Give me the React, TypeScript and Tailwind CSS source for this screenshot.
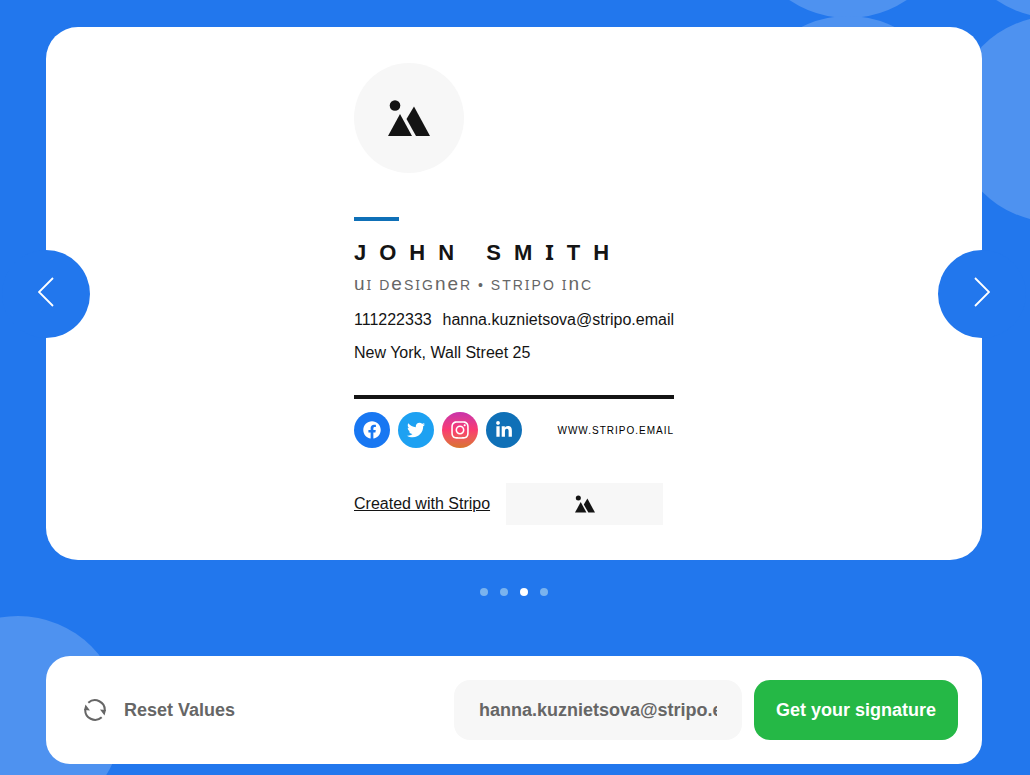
import { useState } from "react";
import { FaFacebook, FaInstagram, FaLinkedinIn, FaTwitter } from "react-icons/fa";

const socials = [
  { name: "Facebook", bg: "bg-[#1877f2]", icon: <FaFacebook size={18} /> },
  { name: "Twitter", bg: "bg-[#1da1f2]", icon: <FaTwitter size={18} /> },
  {
    name: "Instagram",
    bg: "bg-linear-to-b from-[#c832aa] via-[#fb3a70] to-[#d8742a]",
    icon: <FaInstagram size={20} />,
  },
  { name: "LinkedIn", bg: "bg-[#0f70b7]", icon: <FaLinkedinIn size={18} /> },
];

function Mountains({ className }: { className: string }) {
  return (
    <svg viewBox="0 0 42 36" fill="#141414" className={className} aria-hidden="true">
      <circle cx="7" cy="5.5" r="5.3" />
      <path d="M12 14 24 36H0z" />
      <path d="M26 6.500 42 36H28L18.500 19z" />
    </svg>
  );
}

function ResetIcon() {
  return (
    <svg viewBox="0 0 22 22" className="size-[22px]" fill="none" aria-hidden="true">
      <path
        d="M4.300 3.800A9.800 9.800 0 0 1 20.700 12M17.700 18.200A9.800 9.800 0 0 1 1.300 10"
        stroke="currentColor"
        strokeWidth="2"
      />
      <path d="M16 10.500 22 11 20.500 16.500zM6 11.500 0 11 1.500 5.500z" fill="currentColor" />
    </svg>
  );
}

function Arrow({ direction, onClick }: { direction: "prev" | "next"; onClick: () => void }) {
  const prev = direction === "prev";
  return (
    <button
      type="button"
      onClick={onClick}
      aria-label={prev ? "Previous" : "Next"}
      className={`absolute top-1/2 -translate-y-1/2 size-[88px] rounded-full bg-[#2277ed] text-white flex items-center justify-center pb-1 ${
        prev ? "-left-11" : "-right-11"
      }`}
    >
      <svg viewBox="0 0 16 30" className="w-4 h-[30px]" fill="none" stroke="currentColor" strokeWidth="1.8">
        <path d={prev ? "M15 1 1 15 15 29" : "M1 1 15 15 1 29"} />
      </svg>
    </button>
  );
}

// lowercase shapes drawn as tall as the capitals
function Tall({ children }: { children: string }) {
  return <span className="text-[19px] leading-none">{children}</span>;
}

// capital I with serifs
function SerifI() {
  return <span className="font-['Noto_Sans'] leading-none">I</span>;
}

function Signature() {
  return (
    <div className="w-80 mx-auto text-base text-[#141414] whitespace-nowrap">
      <div className="size-[110px] rounded-full bg-[#f7f7f7] flex items-center justify-center">
        <Mountains className="w-[42px] h-9" />
      </div>
      <div className="mt-11 w-[45px] h-1 bg-[#0f70b7]" />

      <h1 className="mt-4 h-8 text-[22px] leading-8 font-bold tracking-[13px]">
        JOHN SM
        <SerifI />
        TH
      </h1>
      <p className="mt-1 h-6 text-sm leading-6 tracking-[2px] text-[#666]">
        <Tall>u</Tall>
        <SerifI /> D<Tall>e</Tall>S<SerifI />G<Tall>ne</Tall>R • STR
        <SerifI />
        PO <SerifI />
        <Tall>n</Tall>C
      </p>
      <div className="mt-[11px] flex justify-between leading-6">
        <span>111222333</span>
        <span>hanna.kuznietsova@stripo.email</span>
      </div>
      <p className="mt-[9px] leading-6">New York, Wall Street 25</p>

      <div className="mt-[30px] h-1 bg-[#141414]" />
      <div className="mt-[13px] flex items-center justify-between">
        <div className="flex gap-2">
          {socials.map((s) => (
            <a
              key={s.name}
              href="#"
              aria-label={s.name}
              className={`size-9 rounded-full text-white flex items-center justify-center ${s.bg}`}
            >
              {s.icon}
            </a>
          ))}
        </div>
        <a href="#" className="text-[10px] tracking-[1px] text-black">
          WWW.STRIPO.EMAIL
        </a>
      </div>

      <div className="mt-[35px] flex items-center gap-4">
        <a href="#" className="underline">
          Created with Stripo
        </a>
        <div className="w-[157px] h-[42px] bg-[#f7f7f7] flex items-center justify-center">
          <Mountains className="w-5 h-[18px]" />
        </div>
      </div>
    </div>
  );
}

export default function App() {
  const [slide, setSlide] = useState(2);
  const [email, setEmail] = useState("hanna.kuznietsova@stripo.email");

  return (
    <div className="relative min-h-screen overflow-hidden bg-[#2277ed] pl-[46px] pr-12 pt-[27px] pb-[11px] font-['Liberation_Sans',Arial,sans-serif]">
      <div className="absolute size-[210px] rounded-full bg-[#4e92f0] right-[77px] -top-[192px]" />
      <div className="absolute size-[210px] rounded-full bg-[#4e92f0] right-[77px] top-4" />
      <div className="absolute size-[210px] rounded-full bg-[#4e92f0] -right-[130px] -top-[192px]" />
      <div className="absolute size-[206px] rounded-full bg-[#4e92f0] -right-32 top-4" />
      <div className="absolute size-52 rounded-full bg-[#4e92f0] -left-[86px] top-[616px]" />

      <main className="relative">
        <section className="relative rounded-[32px] bg-white pt-9 pb-[35px]">
          <Signature />
          <Arrow direction="prev" onClick={() => setSlide((slide + 3) % 4)} />
          <Arrow direction="next" onClick={() => setSlide((slide + 1) % 4)} />
        </section>

        <div className="mt-7 flex justify-center gap-3">
          {[0, 1, 2, 3].map((i) => (
            <button
              key={i}
              type="button"
              aria-label={`Slide ${i + 1}`}
              onClick={() => setSlide(i)}
              className={`size-2 rounded-full ${i === slide ? "bg-white" : "bg-[#7ab3ee]"}`}
            />
          ))}
        </div>

        <form
          className="mt-[60px] flex items-center gap-3 rounded-3xl bg-white p-6 text-lg font-bold text-[#666]"
          onSubmit={(e) => e.preventDefault()}
        >
          <button
            type="button"
            className="mr-auto pl-3.5 flex items-center gap-[18px]"
            onClick={() => setEmail("hanna.kuznietsova@stripo.email")}
          >
            <ResetIcon />
            Reset Values
          </button>
          <input
            type="email"
            aria-label="Email"
            value={email}
            onChange={(e) => setEmail(e.target.value)}
            className="w-72 h-[60px] rounded-2xl bg-[#f7f7f7] px-[25px] outline-none"
          />
          <button type="submit" className="w-[204px] h-[60px] rounded-2xl bg-[#25b846] text-white">
            Get your signature
          </button>
        </form>
      </main>
    </div>
  );
}
